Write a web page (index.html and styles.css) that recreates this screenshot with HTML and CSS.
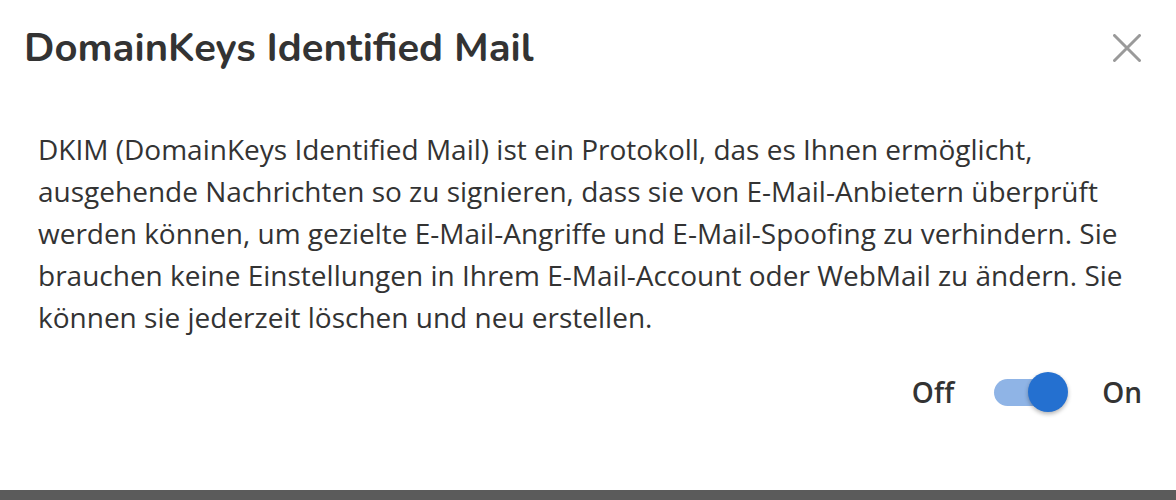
FILE: index.html
```html
<!DOCTYPE html>
<html lang="de">

<head>
    <meta charset="UTF-8">
    <meta name="viewport" content="width=device-width, initial-scale=1.0">
    <title>DKIM</title>
    <link rel="stylesheet" href="styles.css">
</head>

<body>

    <div class="modal">
        <div class="modal-header">
            <h2 class="modal-title">DomainKeys Identified Mail</h2>
            <button class="modal-close" aria-label="Schließen">
                <svg width="28" height="28" viewBox="0 0 28 28">
                    <path d="M1.5 1.5 L26.5 26.5 M26.5 1.5 L1.5 26.5" stroke="#9a9a9a" stroke-width="3" stroke-linecap="round" fill="none" />
                </svg>
            </button>
        </div>

        <div class="modal-body">
            <p class="description">DKIM (DomainKeys Identified Mail) ist ein Protokoll, das es Ihnen ermöglicht,
                ausgehende Nachrichten so zu signieren, dass sie von E-Mail-Anbietern überprüft
                werden können, um gezielte E-Mail-Angriffe und E-Mail-Spoofing zu verhindern. Sie
                brauchen keine Einstellungen in Ihrem E-Mail-Account oder WebMail zu ändern. Sie
                können sie jederzeit löschen und neu erstellen.</p>

            <div class="toggle-row">
                <span class="toggle-label">Off</span>
                <label class="switch">
                    <input type="checkbox" checked>
                    <span class="track"></span>
                    <span class="knob"></span>
                </label>
                <span class="toggle-label">On</span>
            </div>
        </div>
    </div>

    <div class="page-edge"></div>

</body>

</html>
```

FILE: styles.css
```css
body {
    margin: 0;
    background-color: #fff;
    font-family: 'Open Sans', sans-serif;
    color: #333;
}

.modal {
    height: 490px;
    display: flex;
    flex-direction: column;
}

.modal-header {
    display: flex;
    align-items: center;
    justify-content: space-between;
    padding: 22px 35px 0 24px;
}

.modal-title {
    margin: 0;
    font-family: 'Nunito', 'Lato', sans-serif;
    font-size: 40px;
    font-weight: 700;
    line-height: 52px;
}

.modal-close {
    background: none;
    border: none;
    padding: 0;
    cursor: pointer;
    display: flex;
}

.modal-body {
    padding: 54px 38px 0 38px;
}

.description {
    margin: 0;
    font-size: 28px;
    line-height: 42px;
}

.toggle-row {
    display: flex;
    align-items: center;
    justify-content: flex-end;
    margin-top: 34px;
    margin-right: -4px;
}

.toggle-label {
    font-weight: 600;
    font-size: 28px;
    line-height: 40px;
}

.switch {
    position: relative;
    width: 74px;
    height: 40px;
    display: block;
    margin: 0 34px 0 40px;
}

.switch input {
    display: none;
}

.track {
    position: absolute;
    left: 0;
    right: 2px;
    top: 7px;
    height: 27px;
    border-radius: 14px;
    background-color: #8fb4e6;
}

.knob {
    position: absolute;
    right: 0;
    top: 0;
    width: 40px;
    height: 40px;
    border-radius: 50%;
    background-color: #2470d0;
    box-shadow: 0 2px 4px rgba(0, 0, 0, 0.3);
}

.page-edge {
    height: 10px;
    background-color: #5b5b5b;
}
```
